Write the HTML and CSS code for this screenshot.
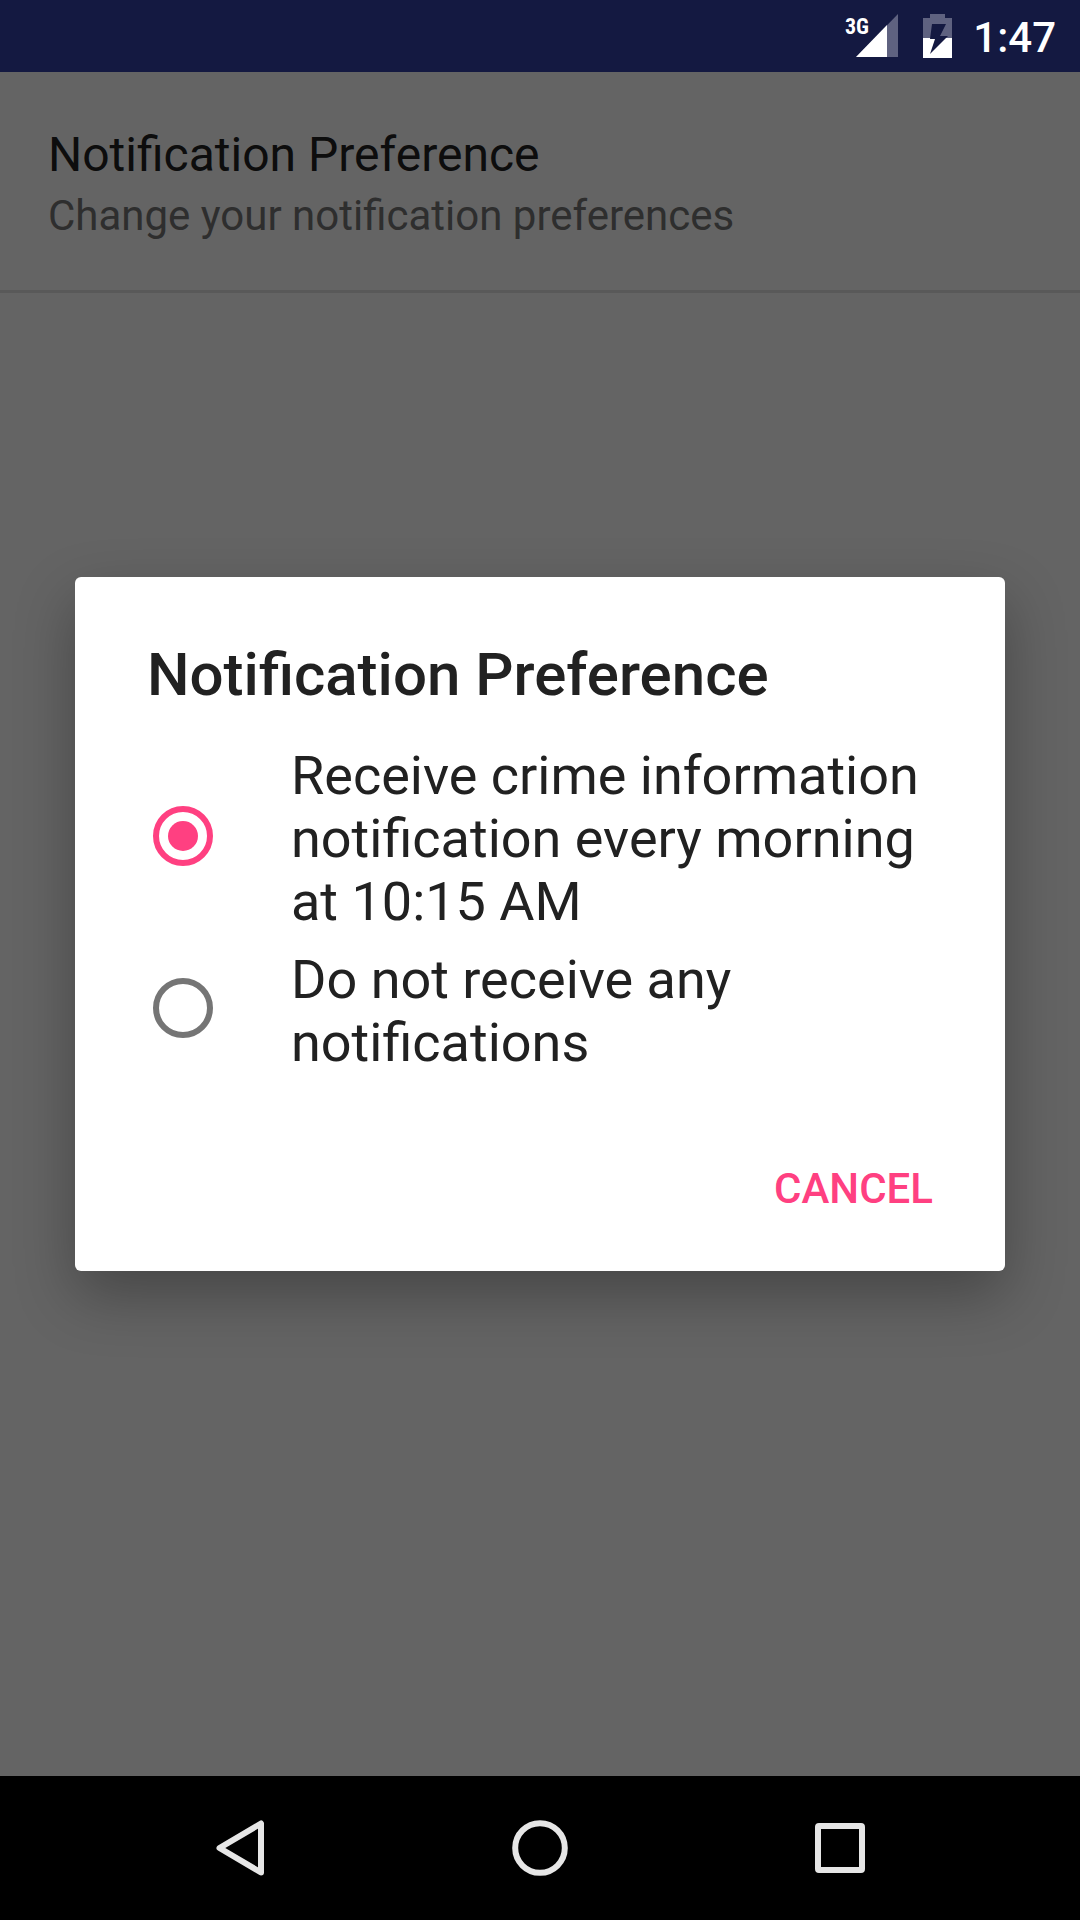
FILE: index.html
```html
<!DOCTYPE html>
<html lang="en">
<head>
<meta charset="utf-8">
<meta name="viewport" content="width=device-width, initial-scale=1">
<title>Notification Preference</title>
<link rel="stylesheet" href="styles.css">
</head>
<body>
<header class="status-bar">
  <svg class="signal" viewBox="0 0 57 45" role="img" aria-label="3G signal">
    <path class="icon-dim" d="M53 0V43H11Z"/>
    <path class="icon-solid" d="M42 11V43H11Z"/>
    <text class="signal-label" x="0" y="20">3G</text>
  </svg>
  <svg class="battery" viewBox="0 0 29 44" role="img" aria-label="Battery charging">
    <path class="icon-dim" d="M7 0H22V4H29V24H0V4H7Z"/>
    <path class="icon-solid" d="M0 24H29V44H0Z"/>
    <path class="battery-bolt" d="M9 10H23L17 22H25L7 40L12 25H7Z"/>
  </svg>
  <time class="clock">1:47</time>
</header>
<main class="screen">
  <section class="preference">
    <h1 class="preference-title">Notification Preference</h1>
    <p class="preference-summary">Change your notification preferences</p>
  </section>
  <div class="scrim">
    <form class="dialog" role="dialog" aria-labelledby="dialog-title">
      <h2 class="dialog-title" id="dialog-title">Notification Preference</h2>
      <label class="option">
        <input class="radio" type="radio" name="notify" checked>
        <span class="option-text">Receive crime information notification every morning at 10:15 AM</span>
      </label>
      <label class="option">
        <input class="radio" type="radio" name="notify">
        <span class="option-text">Do not receive any notifications</span>
      </label>
      <div class="actions">
        <button class="cancel" type="button">CANCEL</button>
      </div>
    </form>
  </div>
</main>
<nav class="nav-bar">
  <button class="nav-button" type="button" aria-label="Back">
    <svg class="nav-icon" viewBox="0 0 60 60"><path d="M51 5.500V54.500L9.500 30Z"/></svg>
  </button>
  <button class="nav-button" type="button" aria-label="Home">
    <svg class="nav-icon" viewBox="0 0 60 60"><circle cx="30" cy="30" r="24.800"/></svg>
  </button>
  <button class="nav-button" type="button" aria-label="Recent apps">
    <svg class="nav-icon" viewBox="0 0 60 60"><rect x="8" y="8" width="44" height="44" rx="1"/></svg>
  </button>
</nav>
</body>
</html>
```
FILE: styles.css
```css
* {
  box-sizing: border-box;
}

body {
  margin: 0;
  min-height: 100vh;
  display: flex;
  flex-direction: column;
  background: #fafafa;
  color: #212121;
  font-family: Roboto, sans-serif;
}

h1, h2, p {
  margin: 0;
}

button {
  border: 0;
  background: none;
  font-family: inherit;
}

.status-bar {
  height: 72px;
  padding: 0 24px;
  display: flex;
  align-items: center;
  justify-content: flex-end;
  gap: 21px;
  background: #141941;
  color: #fff;
}

.signal {
  width: 57px;
  height: 45px;
  overflow: visible;
}

.signal-label {
  fill: #fff;
  font-family: "Roboto Condensed", Roboto, sans-serif;
  font-size: 22px;
  font-weight: 700;
}

.battery {
  width: 29px;
  height: 44px;
}

.icon-dim {
  fill: #5f6280;
}

.icon-solid {
  fill: #fff;
}

.battery-bolt {
  fill: #141941;
}

.clock {
  padding-top: 4px;
  font-size: 42px;
  font-weight: 500;
  line-height: 50px;
}

.screen {
  flex: 1;
  position: relative;
}

.preference {
  padding: 55px 48px 50px;
  border-bottom: 3px solid #dedede;
}

.preference-title {
  font-size: 48px;
  font-weight: 400;
  line-height: 56px;
}

.preference-summary {
  margin-top: 8px;
  color: #737373;
  font-size: 42px;
  line-height: 49px;
}

.scrim {
  position: absolute;
  inset: 0;
  padding: 0 75px;
  display: flex;
  align-items: center;
  justify-content: center;
  background: rgba(0, 0, 0, 0.6);
}

.dialog {
  flex: 1;
  padding: 63px 72px 10px;
  border-radius: 6px;
  background: #fff;
  box-shadow: 0 24px 60px rgba(0, 0, 0, 0.3);
}

.dialog-title {
  margin-bottom: 25px;
  font-size: 60px;
  font-weight: 500;
  line-height: 70px;
}

.option {
  min-height: 144px;
  padding: 3px 0 2px;
  display: flex;
  align-items: center;
  gap: 78px;
}

.radio {
  appearance: none;
  flex: none;
  width: 60px;
  height: 60px;
  margin: 0 0 0 6px;
  display: grid;
  place-items: center;
  border: 6px solid #757575;
  border-radius: 50%;
}

.radio:checked {
  border-color: #ff4081;
}

.radio:checked::before {
  content: "";
  width: 30px;
  height: 30px;
  border-radius: 50%;
  background: #ff4081;
}

.option-text {
  padding-top: 6px;
  font-size: 54px;
  line-height: 63px;
}

.actions {
  margin-top: 37px;
  display: flex;
  justify-content: flex-end;
}

.cancel {
  padding: 48px 0;
  color: #ff4081;
  font-size: 42px;
  font-weight: 500;
  line-height: 49px;
}

.nav-bar {
  height: 144px;
  padding: 0 90px;
  display: grid;
  grid-template-columns: repeat(3, 1fr);
  background: #000;
}

.nav-button {
  padding: 0;
  display: grid;
  place-items: center;
}

.nav-icon {
  width: 60px;
  height: 60px;
  fill: none;
  stroke: #e6e6e6;
  stroke-width: 6;
  stroke-linejoin: round;
}
```
